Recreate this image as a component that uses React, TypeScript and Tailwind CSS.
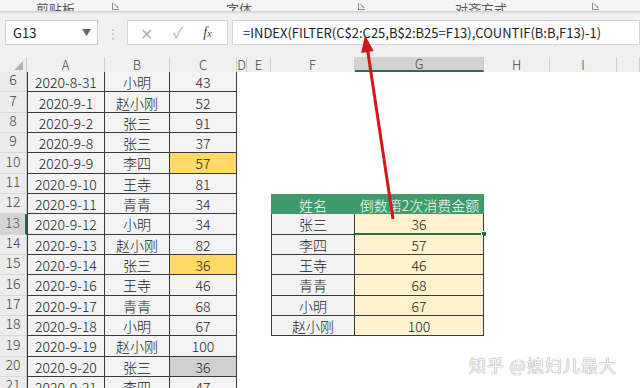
import React from "react";

type Row = { n: number; date: string; name: string; amt: string; fill?: string };

const rows: Row[] = [
  { n: 6, date: "2020-8-31", name: "小明", amt: "43" },
  { n: 7, date: "2020-9-1", name: "赵小刚", amt: "52" },
  { n: 8, date: "2020-9-2", name: "张三", amt: "91" },
  { n: 9, date: "2020-9-8", name: "张三", amt: "37" },
  { n: 10, date: "2020-9-9", name: "李四", amt: "57", fill: "yellow" },
  { n: 11, date: "2020-9-10", name: "王寺", amt: "81" },
  { n: 12, date: "2020-9-11", name: "青青", amt: "34" },
  { n: 13, date: "2020-9-12", name: "小明", amt: "34" },
  { n: 14, date: "2020-9-13", name: "赵小刚", amt: "82" },
  { n: 15, date: "2020-9-14", name: "张三", amt: "36", fill: "yellow" },
  { n: 16, date: "2020-9-16", name: "王寺", amt: "46" },
  { n: 17, date: "2020-9-17", name: "青青", amt: "68" },
  { n: 18, date: "2020-9-18", name: "小明", amt: "67" },
  { n: 19, date: "2020-9-19", name: "赵小刚", amt: "100" },
  { n: 20, date: "2020-9-20", name: "张三", amt: "36", fill: "gray" },
  { n: 21, date: "2020-9-21", name: "李四", amt: "47" },
];

// result table sits on rows 12..18 in columns F and G
const result: Record<number, [string, string]> = {
  13: ["张三", "36"],
  14: ["李四", "57"],
  15: ["王寺", "46"],
  16: ["青青", "68"],
  17: ["小明", "67"],
  18: ["赵小刚", "100"],
};

const cols = [
  { l: "A", w: "w-[78px]" },
  { l: "B", w: "w-[65px]" },
  { l: "C", w: "w-[67px]" },
  { l: "D", w: "w-[10px]" },
  { l: "E", w: "w-[24px]" },
  { l: "F", w: "w-[84px]" },
  { l: "G", w: "w-[129px]" },
  { l: "H", w: "w-[66px]" },
  { l: "I", w: "w-[67px]" },
  { l: "", w: "flex-1" },
];

function Launcher() {
  return (
    <span className="inline-block h-[7px] w-[7px] border-l border-b border-[#8a8a8a] text-[6px] leading-[6px] text-[#666]">
      ↘
    </span>
  );
}

function SheetRow({ r }: { r: Row }) {
  const active = r.n === 13;
  const cFill =
    r.fill === "yellow" ? "bg-[#ffd966]" : r.fill === "gray" ? "bg-[#d0d0d0]" : "bg-[#f3f3f3]";
  const res = result[r.n];
  const isHead = r.n === 12;
  const inTable = isHead || !!res;

  return (
    <div className="flex h-[20.33px] shrink-0 font-light">
      <div
        className={`flex w-[27px] items-end justify-center pb-[1px] text-[14px] ${
          active
            ? "border-r-2 border-[#217346] bg-[#d4d4d4] text-[#555]"
            : "border-r border-[#c8c8c8] bg-[#ececec] text-[#444]"
        } border-b border-b-[#d8d8d8]`}
      >
        {r.n}
      </div>
      <div className="flex w-[78px] items-center justify-center border-b border-l border-r border-[#3a3a3a] bg-[#f3f3f3] pt-[2px] text-[14px] text-[#222]">
        {r.date}
      </div>
      <div className="flex w-[65px] items-center justify-center border-b border-r border-[#3a3a3a] bg-[#f3f3f3] pt-[2px] text-[14px] text-[#222]">
        {r.name}
      </div>
      <div
        className={`flex w-[67px] items-center justify-center border-b border-r border-[#3a3a3a] ${cFill} pt-[2px] text-[14px] text-[#222]`}
      >
        {r.amt}
      </div>
      <div className="w-[34px]" />
      {inTable ? (
        <>
          <div
            className={`flex w-[84px] items-center justify-center pt-[2px] text-[14px] ${
              isHead
                ? "bg-[#3f9b6b] text-white"
                : "border-b border-l border-r border-[#3a3a3a] bg-[#f2f2f2] text-[#222]"
            }`}
          >
            {isHead ? "姓名" : res[0]}
          </div>
          <div
            className={`relative flex w-[129px] items-center justify-center pt-[2px] text-[14px] ${
              isHead
                ? "bg-[#3f9b6b] text-white"
                : active
                ? "border-b-2 border-r border-b-[#217346] border-r-[#3a3a3a] bg-[#fff2cc] text-[#222]"
                : "border-b border-r border-[#3a3a3a] bg-[#fff2cc] text-[#222]"
            }`}
          >
            {isHead ? "倒数第2次消费金额" : res[1]}
            {active && (
              <span className="absolute -bottom-[4px] -right-[4px] h-[6px] w-[6px] border border-white bg-[#217346]" />
            )}
          </div>
        </>
      ) : (
        <div className="w-[213px]" />
      )}
      <div className="flex-1" />
    </div>
  );
}

export default function App() {
  return (
    <div className="relative h-[388px] w-[640px] overflow-hidden bg-white font-['Noto_Sans_CJK_SC','Noto_Sans',sans-serif]">
      {/* Ribbon group labels, cut off at the top */}
      <div className="flex h-[12px] items-end overflow-hidden border-b border-[#d4d4d4] bg-[#f5f5f5] text-[13px] leading-[13px] text-[#555]">
        <div className="flex w-[120px] items-end">
          <span className="ml-[36px] -mb-[4px]">剪贴板</span>
          <span className="ml-[37px] mb-[1px]">
            <Launcher />
          </span>
        </div>
        <div className="flex w-[330px] items-end">
          <span className="ml-[106px] -mb-[4px]">字体</span>
          <span className="ml-[106px] mb-[1px]">
            <Launcher />
          </span>
        </div>
        <div className="flex flex-1 items-end">
          <span className="ml-[5px] -mb-[4px]">对齐方式</span>
          <span className="ml-[85px] mb-[1px]">
            <Launcher />
          </span>
        </div>
      </div>
      <div className="h-[2px] bg-gradient-to-b from-[#dcdcdc] to-[#efefef]" />

      {/* Formula bar */}
      <div className="flex h-[43px] items-start bg-[#f0f0f0] pt-[6px]">
        <div className="ml-[5px] flex h-[25px] w-[93px] items-center justify-between border border-[#d2d2d2] bg-white pl-[7px] pr-[6px] text-[13px] text-[#222]">
          <span>G13</span>
          <span className="text-[9px] text-[#666]">▼</span>
        </div>
        <div className="flex h-[25px] w-[29px] items-center justify-center text-[12px] text-[#b8b8b8]">⋮</div>
        <div className="flex h-[25px] w-[101px] items-center border border-[#d6d6d6] bg-white text-[#b0b0b0]">
          <span className="ml-[12px] text-[16px] font-light">✕</span>
          <span className="ml-[20px] text-[15px]">✓</span>
          <span className="ml-[20px] font-['Liberation_Serif',serif] text-[14px] italic text-[#444]">
            f<span className="text-[10px]">x</span>
          </span>
        </div>
        <div className="ml-[4px] flex h-[25px] flex-1 items-center border border-[#d6d6d6] bg-white pl-[10px] text-[13px] text-[#222]">
          =INDEX(FILTER(C$2:C25,B$2:B25=F13),COUNTIF(B:B,F13)-1)
        </div>
      </div>

      {/* Column headers */}
      <div className="flex h-[15px] bg-[#f0f0f0] text-[13px] font-light leading-[15px] text-[#444]">
        <div className="relative w-[27px] border-r border-[#c8c8c8]">
          <span className="absolute bottom-[2px] right-[3px] h-0 w-0 border-b-[9px] border-l-[9px] border-b-[#b4b4b4] border-l-transparent" />
        </div>
        {cols.map((c) => (
          <div
            key={c.l || "x"}
            className={`${c.w} flex items-center justify-center ${
              c.l === "G" ? "border-b-2 border-r border-b-[#217346] border-r-[#c8c8c8] bg-[#d2d2d2]" : "border-r border-[#d0d0d0]"
            }`}
          >
            {c.l}
          </div>
        ))}
      </div>

      {/* Sheet rows */}
      <div className="flex flex-col">
        {rows.map((r) => (
          <SheetRow key={r.n} r={r} />
        ))}
      </div>

      {/* Red annotation arrow */}
      <svg className="pointer-events-none absolute inset-0" width="640" height="388" viewBox="0 0 640 388">
        <line x1="393" y1="219" x2="367.6" y2="50" stroke="#d3161c" strokeWidth="3" />
        <polygon points="365,35 361.2,53 373.6,51" fill="#d3161c" />
      </svg>

      {/* Watermark */}
      <div className="pointer-events-none absolute left-[469px] top-[352px] text-[17px] tracking-[1px] text-[#f7f7f7] [text-shadow:0_0_1px_#9a9a9a,0_0_1px_#9a9a9a]">
        知乎 @媳妇儿最大
      </div>
    </div>
  );
}
